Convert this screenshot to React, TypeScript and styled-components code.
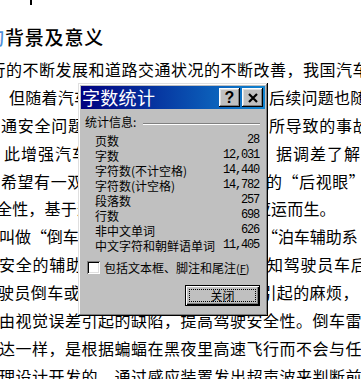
import React from "react";
import styled, { createGlobalStyle } from "styled-components";

const GlobalStyle = createGlobalStyle`
  html, body {
    margin: 0;
    padding: 0;
    background: #fff;
  }
`;

const Page = styled.div`
  position: relative;
  width: 361px;
  height: 379px;
  overflow: hidden;
  background: #fff;
  color: #000;
  font-family: "Noto Sans CJK SC", "Noto Sans", sans-serif;
`;

const TopEdge = styled.div`
  height: 23px;
`;

const Stub = styled.span`
  display: block;
  width: 2px;
  height: 5px;
  margin-left: 30px;
  background: #000;
`;

const Heading = styled.h1`
  margin: 0;
  height: 28px;
  line-height: 28px;
  font-size: 19px;
  font-weight: 500;
  letter-spacing: 0.8px;
  white-space: nowrap;
  text-indent: -14.8px;
`;

const CutChar = styled.span`
  color: #4f8fd8;
`;

const Body = styled.div`
  margin-top: 5px;
`;

const Line = styled.p<{ $indent: number; $track: number }>`
  margin: 0;
  height: 27.9px;
  line-height: 27.9px;
  font-size: 16px;
  white-space: nowrap;
  text-indent: ${(p) => p.$indent}px;
  letter-spacing: ${(p) => p.$track}px;
`;

/* ---- dialog ---- */

const Dialog = styled.div`
  position: absolute;
  left: 78px;
  top: 83px;
  width: 190px;
  height: 233px;
  box-sizing: border-box;
  padding: 3px;
  display: flex;
  flex-direction: column;
  background: #c0c0c0;
  box-shadow: inset -1px -1px #000, inset 1px 1px #dfdfdf,
    inset -2px -2px #808080, inset 2px 2px #fff;
  font-size: 12px;
`;

const TitleBar = styled.div`
  height: 23px;
  display: flex;
  align-items: center;
  background: linear-gradient(90deg, #000080, #1084d0);
`;

const Title = styled.div`
  flex: 1;
  padding-left: 1px;
  color: #fff;
  font-size: 18px;
  line-height: 23px;
  letter-spacing: 0.3px;
  white-space: nowrap;
`;

const Controls = styled.div`
  display: flex;
  gap: 2px;
  margin-right: 2px;
`;

const CaptionButton = styled.div`
  width: 21px;
  height: 19px;
  display: flex;
  align-items: center;
  justify-content: center;
  background: #c0c0c0;
  box-shadow: inset -1px -1px #000, inset 1px 1px #fff,
    inset -2px -2px #808080, inset 2px 2px #dfdfdf;
  font-family: "Liberation Sans", Arial, sans-serif;
  font-weight: 700;
  font-size: 16px;
  color: #000;
`;

const Content = styled.div`
  flex: 1;
  display: flex;
  flex-direction: column;
  padding: 5px 5px 0 4px;
`;

const HeaderRow = styled.div`
  display: flex;
  align-items: center;
  height: 15px;
  line-height: 15px;
`;

const Rule = styled.div`
  flex: 1;
  margin: 4px 0 0 7px;
  border-top: 1px solid #808080;
  border-bottom: 1px solid #fff;
`;

const StatList = styled.div`
  margin-top: 4px;
  padding: 0 1px 0 10px;
`;

const StatRow = styled.div`
  display: flex;
  justify-content: space-between;
  height: 15px;
  line-height: 15px;
  white-space: nowrap;
`;

const Value = styled.span`
  font-family: "Liberation Mono", "DejaVu Sans Mono", monospace;
  font-size: 12px;
  letter-spacing: -1.2px;
`;

const CheckRow = styled.label`
  display: flex;
  align-items: center;
  height: 15px;
  margin-top: 7px;
  padding-left: 2px;
  white-space: nowrap;
`;

const CheckBox = styled.span`
  width: 13px;
  height: 13px;
  background: #fff;
  box-shadow: inset 1px 1px #808080, inset -1px -1px #fff,
    inset 2px 2px #000, inset -2px -2px #dfdfdf;
`;

const CheckText = styled.span`
  margin-left: 4px;
`;

const Hotkey = styled.span`
  font-size: 11px;
  u {
    text-decoration: underline;
  }
`;

const ButtonRow = styled.div`
  display: flex;
  justify-content: flex-end;
  margin-top: 10px;
`;

const PushButton = styled.div`
  width: 75px;
  height: 21px;
  box-sizing: border-box;
  padding: 3px;
  display: flex;
  border: 1px solid #000;
  background: #c0c0c0;
  box-shadow: inset 1px 1px #fff, inset -1px -1px #000,
    inset -2px -2px #808080;
`;

const FocusRing = styled.span`
  flex: 1;
  display: flex;
  align-items: center;
  justify-content: center;
  border: 1px dotted #000;
  font-size: 12px;
  line-height: 1;
`;

const lines = [
  { indent: -10.5, track: 0.5, text: "行的不断发展和道路交通状况的不断改善，我国汽车" },
  { indent: 9, track: 0.25, text: "但随着汽车数量的迅速增加，带来的后续问题也随" },
  { indent: 1, track: 0.75, text: "通安全问题日益突出，交通事故中因所导致的事故" },
  { indent: 4, track: 1, text: "此增强汽车的行车安全性尤为重要。据调差了解" },
  { indent: 1, track: 0.56, text: "希望有一双可以帮助驾驶员看清车后的“后视眼”" },
  { indent: -4, track: 0.18, text: "全性，基于这样的需求，倒车雷达便应运而生。" },
  { indent: -1, track: -0.06, text: "叫做“倒车雷达”，又称为防撞雷达或“泊车辅助系" },
  { indent: -1, track: 0.75, text: "安全的辅助装置，能以声音或图像告知驾驶员车后" },
  { indent: -2, track: 0.4, text: "驶员倒车或停车时，由于视线盲区所引起的麻烦，" },
  { indent: -1, track: 0.5, text: "由视觉误差引起的缺陷，提高驾驶安全性。倒车雷" },
  { indent: -1, track: 0.5, text: "达一样，是根据蝙蝠在黑夜里高速飞行而不会与任" },
  { indent: -1, track: 0.5, text: "理设计开发的，通过感应装置发出超声波来判断前" },
];

const stats = [
  ["页数", "28"],
  ["字数", "12,031"],
  ["字符数(不计空格)", "14,440"],
  ["字符数(计空格)", "14,782"],
  ["段落数", "257"],
  ["行数", "698"],
  ["非中文单词", "626"],
  ["中文字符和朝鲜语单词", "11,405"],
];

function CloseGlyph() {
  return (
    <svg width="10" height="10" viewBox="0 0 10 10">
      <path d="M1 1 L9 9 M9 1 L1 9" stroke="#000" strokeWidth="2.2" />
    </svg>
  );
}

export default function App() {
  return (
    <Page lang="zh-CN">
      <GlobalStyle />
      <TopEdge>
        <Stub />
      </TopEdge>
      <Heading>
        <CutChar>的</CutChar>背景及意义
      </Heading>
      <Body>
        {lines.map((l, i) => (
          <Line key={i} $indent={l.indent} $track={l.track}>
            {l.text}
          </Line>
        ))}
      </Body>

      <Dialog>
        <TitleBar>
          <Title>字数统计</Title>
          <Controls>
            <CaptionButton>?</CaptionButton>
            <CaptionButton>
              <CloseGlyph />
            </CaptionButton>
          </Controls>
        </TitleBar>
        <Content>
          <HeaderRow>
            统计信息:
            <Rule />
          </HeaderRow>
          <StatList>
            {stats.map(([label, value]) => (
              <StatRow key={label}>
                <span>{label}</span>
                <Value>{value}</Value>
              </StatRow>
            ))}
          </StatList>
          <CheckRow>
            <CheckBox />
            <CheckText>
              包括文本框、脚注和尾注
              <Hotkey>
                (<u>F</u>)
              </Hotkey>
            </CheckText>
          </CheckRow>
          <ButtonRow>
            <PushButton>
              <FocusRing>关闭</FocusRing>
            </PushButton>
          </ButtonRow>
        </Content>
      </Dialog>
    </Page>
  );
}
